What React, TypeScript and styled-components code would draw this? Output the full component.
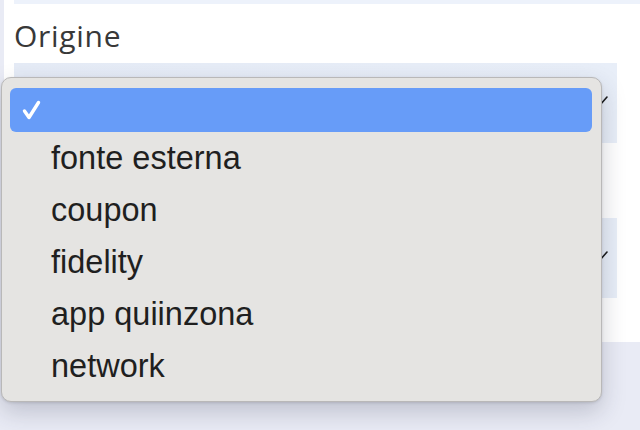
import React from 'react';
import styled, { createGlobalStyle } from 'styled-components';

const GlobalStyle = createGlobalStyle`
  html, body {
    margin: 0;
    padding: 0;
    background: #e9ebf5;
  }
  * {
    box-sizing: border-box;
  }
`;

const Screen = styled.div`
  position: relative;
  width: 640px;
  height: 430px;
  overflow: hidden;
  background: #e9ebf5;
`;

const Panel = styled.div`
  margin-left: 4px;
  height: 342px;
  background: #ffffff;
  padding: 0 0 0 10px;
  display: flex;
  flex-direction: column;
`;

const TopField = styled.div`
  height: 4px;
  background: #edf2fb;
`;

const Label = styled.div`
  font-family: 'Open Sans', 'Liberation Sans', sans-serif;
  font-size: 30px;
  letter-spacing: 0.7px;
  line-height: 40px;
  color: #383838;
  padding-top: 12px;
  margin-bottom: 7px;
`;

const SelectBox = styled.div<{ $gap?: number }>`
  height: 80px;
  margin-right: 23px;
  margin-top: ${(p) => p.$gap ?? 0}px;
  background: linear-gradient(90deg, #e5ebf6 0%, #e8eef8 100%);
  display: flex;
  align-items: center;
  justify-content: flex-end;
  padding: 0 9px 4px 0;
`;

const Chevron = styled.svg`
  width: 16px;
  height: 10px;
  overflow: visible;
`;

const Popup = styled.div`
  position: absolute;
  left: 1px;
  top: 77px;
  width: 601px;
  height: 325px;
  background: #e5e4e2;
  border: 1px solid #b9b8b8;
  border-radius: 10px;
  box-shadow: 0 10px 24px rgba(40, 45, 70, 0.22), 0 1px 3px rgba(0, 0, 0, 0.12);
  padding: 10px 9px 0 8px;
  display: flex;
  flex-direction: column;
`;

const Option = styled.div<{ $active?: boolean }>`
  height: ${(p) => (p.$active ? 44 : 52)}px;
  border-radius: 6px;
  background: ${(p) => (p.$active ? '#679cf8' : 'transparent')};
  display: flex;
  align-items: center;
  font-family: 'Liberation Sans', Arial, sans-serif;
  font-size: 32.5px;
  color: ${(p) => (p.$active ? '#ffffff' : '#1f1f1f')};
`;

const CheckCell = styled.div`
  width: 41px;
  padding-left: 12px;
  display: flex;
  align-items: center;
`;

const Check = styled.svg`
  width: 19px;
  height: 20px;
`;

const options = ['fonte esterna', 'coupon', 'fidelity', 'app quiinzona', 'network'];

const ChevronIcon = () => (
  <Chevron viewBox="0 0 16 10">
    <polyline points="1,1 8,9 15,1" fill="none" stroke="#1a1a1a" strokeWidth="1.6" strokeLinecap="round" strokeLinejoin="round" />
  </Chevron>
);

export default function App() {
  return (
    <Screen>
      <GlobalStyle />
      <Panel>
        <TopField />
        <Label>Origine</Label>
        <SelectBox>
          <ChevronIcon />
        </SelectBox>
        <SelectBox $gap={75}>
          <ChevronIcon />
        </SelectBox>
      </Panel>
      <Popup>
        <Option $active>
          <CheckCell>
            <Check viewBox="0 0 19 20">
              <polyline points="2.5,11 7,17.5 16.5,2.5" fill="none" stroke="#ffffff" strokeWidth="3.4" strokeLinecap="round" strokeLinejoin="round" />
            </Check>
          </CheckCell>
        </Option>
        {options.map((o) => (
          <Option key={o}>
            <CheckCell />
            {o}
          </Option>
        ))}
      </Popup>
    </Screen>
  );
}
